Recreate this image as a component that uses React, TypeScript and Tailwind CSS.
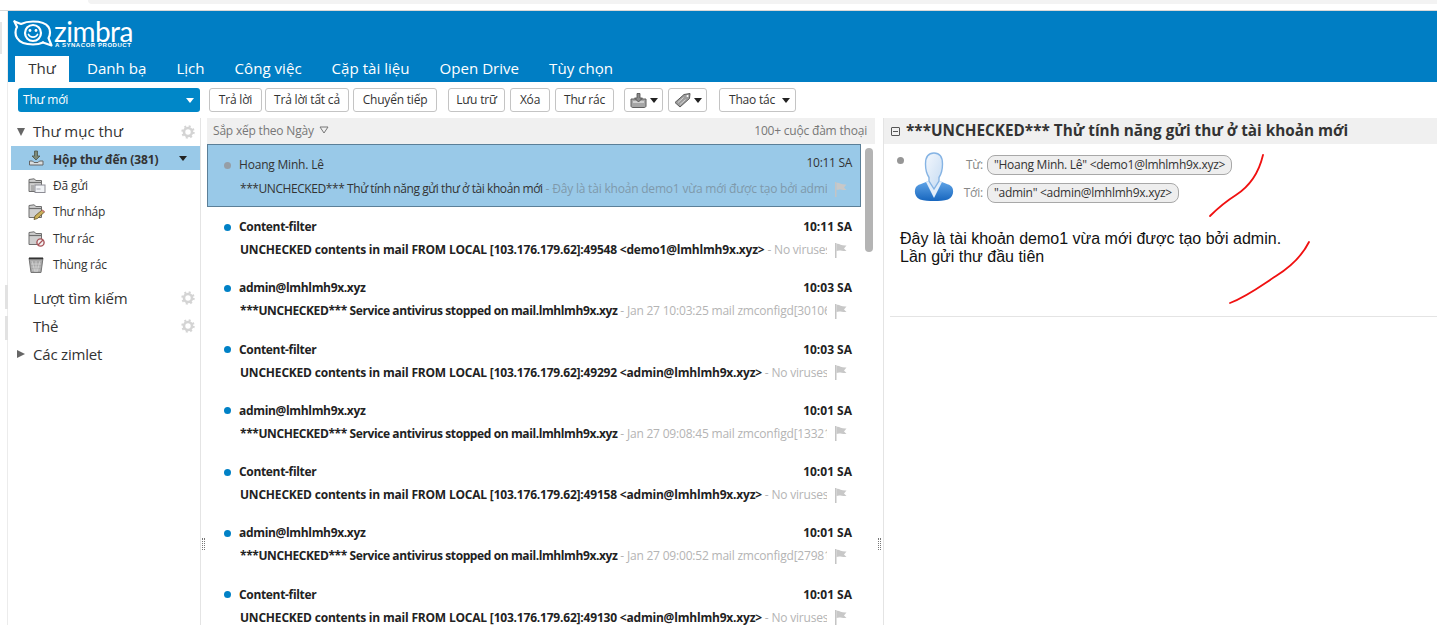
import React from 'react';

const tabs = ['Thư', 'Danh bạ', 'Lịch', 'Công việc', 'Cặp tài liệu', 'Open Drive', 'Tùy chọn'];

const spam = 'UNCHECKED contents in mail FROM LOCAL [103.176.179.62]:';
const stopped = '***UNCHECKED*** Service antivirus stopped on mail.lmhlmh9x.xyz';

const rows = [
  { from: 'Content-filter', time: '10:11 SA', subject: spam + '49548 <demo1@lmhlmh9x.xyz>', preview: 'No viruses found', tight: false },
  { from: 'admin@lmhlmh9x.xyz', time: '10:03 SA', subject: stopped, preview: 'Jan 27 10:03:25 mail zmconfigd[30106]', tight: true },
  { from: 'Content-filter', time: '10:03 SA', subject: spam + '49292 <admin@lmhlmh9x.xyz>', preview: 'No viruses found', tight: false },
  { from: 'admin@lmhlmh9x.xyz', time: '10:01 SA', subject: stopped, preview: 'Jan 27 09:08:45 mail zmconfigd[13321]', tight: true },
  { from: 'Content-filter', time: '10:01 SA', subject: spam + '49158 <admin@lmhlmh9x.xyz>', preview: 'No viruses found', tight: false },
  { from: 'admin@lmhlmh9x.xyz', time: '10:01 SA', subject: stopped, preview: 'Jan 27 09:00:52 mail zmconfigd[27981]', tight: true },
  { from: 'Content-filter', time: '10:01 SA', subject: spam + '49130 <admin@lmhlmh9x.xyz>', preview: 'No viruses found', tight: false },
];

function Gear() {
  return (
    <svg width="14" height="14" viewBox="0 0 14 14" className="shrink-0">
      <circle cx="7" cy="7" r="4" fill="none" stroke="#d4d4d4" strokeWidth="2.6" />
      <circle cx="7" cy="7" r="5.7" fill="none" stroke="#d4d4d4" strokeWidth="2" strokeDasharray="2 2.48" />
    </svg>
  );
}

function Flag() {
  return (
    <svg width="14" height="15" viewBox="0 0 14 15" className="shrink-0">
      <rect x="1" y="0" width="1.5" height="15" fill="#c4c4c4" />
      <path d="M2.5 1 C5 0 7 3 12.5 2.5 L10 5.5 L12.5 8 C8 8.5 6 6.5 2.5 8 Z" fill="#c8c8c8" />
    </svg>
  );
}

function Caret({ color = '#222' }: { color?: string }) {
  return <span className="inline-block w-0 h-0 border-x-[4px] border-x-transparent border-t-[5px]" style={{ borderTopColor: color }} />;
}

function ToolButton({ label, className = '' }: { label: string; className?: string }) {
  return (
    <button className={`h-[24px] border border-[#c4c4c4] rounded-[3px] bg-white text-[12px] text-[#333] whitespace-nowrap ${className}`}>
      {label}
    </button>
  );
}

function FolderIcon({ badge }: { badge: 'sent' | 'draft' | 'spam' }) {
  return (
    <svg width="18" height="16" viewBox="0 0 18 16" className="shrink-0">
      <path d="M1 13.5 L1 1.5 L6 0.8 L8 2.5 L13.5 2.5 L13.5 13.5 Z" fill="#cfcfcf" stroke="#6f6f6f" />
      <path d="M1 4.5 H13.5" stroke="#6f6f6f" strokeWidth="1.2" />
      {badge === 'sent' && <rect x="7" y="7" width="10" height="7.5" fill="#f1f3f6" stroke="#8d8d95" />}
      {badge === 'sent' && <path d="M3 8h3M3 10h3M3 12h3" stroke="#8a8a8a" />}
      {badge === 'sent' && <path d="M8.5 11h4" stroke="#a9a9b3" />}
      {badge === 'draft' && <path d="M6 15.5 L7 12 L14 6 L16.5 8 L9.5 14.5 Z" fill="#cbb05a" stroke="#5f5128" strokeWidth="0.8" />}
      {badge === 'draft' && <path d="M14 6 L16.5 8" stroke="#d07a7a" strokeWidth="1.6" />}
      {badge === 'spam' && <circle cx="12.5" cy="11.5" r="3.6" fill="#f3f3f3" stroke="#a8555a" strokeWidth="1.4" />}
      {badge === 'spam' && <path d="M10 14 L15 9" stroke="#a8555a" strokeWidth="1.3" />}
    </svg>
  );
}

function FolderRow({ icon, label }: { icon: React.ReactNode; label: string }) {
  return (
    <div className="h-[26.3px] flex items-center pl-[17px]">
      <span className="w-[25px] flex">{icon}</span>
      <span className="text-[12px] text-[#333]">{label}</span>
    </div>
  );
}

function SectionRow({ label, gear, arrow }: { label: string; gear?: boolean; arrow?: boolean }) {
  return (
    <div className="h-[28px] flex items-center pl-[6px] pr-[5px]">
      <span className="w-[16px] flex">
        {arrow && <span className="w-0 h-0 border-y-[4.5px] border-y-transparent border-l-[8px] border-l-[#666]" />}
      </span>
      <span className="text-[15px] text-[#333]">{label}</span>
      {gear && <span className="ml-auto flex"><Gear /></span>}
    </div>
  );
}

function MailRow({ row }: { row: (typeof rows)[number] }) {
  return (
    <div className="h-[61.3px] pl-[17px] pr-[12px] pt-[10px]">
      <div className="flex items-center h-[20px]">
        <span className="w-[7px] h-[7px] rounded-full bg-[#0081c6] mr-[8px] shrink-0" />
        <span className="font-bold text-[12px] text-[#222] flex-1 tracking-[-0.33px]">{row.from}</span>
        <span className="font-bold text-[12px] text-[#222] mr-[-3px] tracking-[0px]">{row.time}</span>
      </div>
      <div className="flex items-center h-[20px] mt-[3px] pl-[16px]">
        <div className="flex-1 min-w-0 whitespace-nowrap overflow-hidden text-[12px]">
          <span className={`font-bold text-[#222] ${row.tight ? 'tracking-[-0.4px]' : ''}`}>{row.subject}</span>
          <span className="text-[#b4b4b4]"> - {row.preview}</span>
        </div>
        <span className="ml-[7px] mr-[1px] flex"><Flag /></span>
      </div>
    </div>
  );
}

export default function App() {
  return (
    <div className="relative h-[625px] w-[1437px] overflow-hidden bg-white font-['Open_Sans',sans-serif] tracking-[-0.2px]">
      {/* browser chrome leftovers */}
      <div className="h-[11px] bg-white border-b border-[#d8d8d8] pl-[88px]">
        <div className="h-[4px] bg-[#f3f3f3] rounded-bl-[4px]" />
      </div>

      <div className="flex h-[614px]">
        <div className="w-[8px] shrink-0 bg-white border-r border-[#ececec] flex flex-col">
          <div className="mt-[11px] h-[32px] w-[2px] bg-[#e6e6e6]" />
          <div className="mt-[231px] ml-[5px] h-[24px] w-[3px] bg-[#e2e2e2]" />
          <div className="mt-[7px] ml-[5px] h-[24px] w-[3px] bg-[#e2e2e2]" />
        </div>

        <div className="flex-1 min-w-0 flex flex-col">
          <header className="h-[71px] bg-[#007ec4] shrink-0 flex flex-col">
            <div className="h-[45px] flex items-start pl-[5px] pt-[8.5px]">
              <svg width="40" height="27" viewBox="0 0 40 27" className="shrink-0">
                <g fill="none" stroke="#fff" strokeLinecap="round" strokeLinejoin="round">
                  <path d="M1.5 1.5 L8 4 C12 2 16 1.5 20 1.5 C27 1.5 33 3.5 35.5 7 C37.5 10 37.5 15 35.5 18 L38.5 25.5 L30 22.5" strokeWidth="2.2" />
                  <path d="M1.5 1.5 L4 7 C2 10 2 15 4 18 C7 23 13 24.5 20 24.5 C24 24.5 27 24 30 22.5" strokeWidth="2.2" />
                  <circle cx="20" cy="13" r="8" strokeWidth="2.2" />
                  <path d="M15.5 14.5 C17 18 23 18 24.5 14.5" strokeWidth="1.7" />
                </g>
                <circle cx="17" cy="10.5" r="1.4" fill="#fff" />
                <circle cx="23" cy="10.5" r="1.4" fill="#fff" />
              </svg>
              <div className="flex flex-col ml-[1px] text-white">
                <span className="h-[22px] font-['Lato',sans-serif] text-[28px] leading-[22px] tracking-[-0.5px]">zimbra</span>
                <span className="h-[7px] mt-[0.5px] font-['Liberation_Sans',sans-serif] font-bold text-[6px] leading-[7px] tracking-[0.55px] ml-[1px] whitespace-nowrap">A SYNACOR PRODUCT</span>
              </div>
            </div>
            <nav className="h-[26px] flex items-stretch pl-[7px] tracking-[0px]">
              {tabs.map((tab, i) => (
                <div
                  key={tab}
                  className={`flex items-center justify-center text-[15.1px] leading-none ${
                    i === 0 ? 'bg-white text-[#333] w-[54px] mr-[3px]' : 'text-white px-[15px]'
                  }`}
                >
                  {tab}
                </div>
              ))}
            </nav>
          </header>

          <div className="h-[36px] shrink-0 flex items-center pl-[10px]">
            <button className="w-[182px] h-[24px] rounded-[3px] bg-[#0087c8] flex items-center justify-between px-[5px] pr-[6px] mr-[9px] text-white text-[12px]">
              Thư mới
              <Caret color="#fff" />
            </button>
            <ToolButton label="Trả lời" className="w-[53px]" />
            <ToolButton label="Trả lời tất cả" className="w-[84px] ml-[3px]" />
            <ToolButton label="Chuyển tiếp" className="w-[84px] ml-[4px]" />
            <ToolButton label="Lưu trữ" className="w-[57px] ml-[11px]" />
            <ToolButton label="Xóa" className="w-[40px] ml-[5px]" />
            <ToolButton label="Thư rác" className="w-[59px] ml-[5px]" />
            <button className="ml-[10px] h-[24px] w-[39px] border border-[#c4c4c4] rounded-[3px] flex items-center justify-center gap-[3px]">
              <svg width="17" height="15" viewBox="0 0 17 15">
                <path d="M1 6 H16 V13 C16 14 15 14.5 14 14.5 H3 C2 14.5 1 14 1 13 Z" fill="#a6a6a6" stroke="#5f5f5f" />
                <path d="M3 9 H14" stroke="#e2e2e2" strokeWidth="1.4" />
                <path d="M7 0.5 H10 V5 H12.5 L8.5 9 L4.5 5 H7 Z" fill="#8a8a8a" stroke="#4c4c4c" strokeWidth="0.8" />
              </svg>
              <Caret />
            </button>
            <button className="ml-[5px] h-[24px] w-[39px] border border-[#c4c4c4] rounded-[3px] flex items-center justify-center gap-[3px]">
              <svg width="17" height="15" viewBox="0 0 17 15">
                <path d="M1 9.5 L10 1.5 L16 0.5 L15.5 5.5 L6 14 Z" fill="#9c9c9c" stroke="#5a5a5a" />
                <path d="M4 9.5 L9.5 4.5 M6 11.5 L11.5 6.5" stroke="#d6d6d6" />
                <circle cx="13.5" cy="3" r="1" fill="#fff" />
              </svg>
              <Caret />
            </button>
            <button className="ml-[12px] h-[24px] w-[77px] border border-[#c4c4c4] rounded-[3px] flex items-center justify-between pl-[9px] pr-[5px] text-[12px] text-[#333]">
              Thao tác
              <Caret />
            </button>
          </div>

          <div className="flex-1 min-h-0 flex">
            <aside className="w-[192px] shrink-0 pl-[3px] pr-0">
              <div className="h-[28px] flex items-center pl-[6px] pr-[5px]">
                <span className="w-[16px] flex"><span className="w-0 h-0 border-x-[4.5px] border-x-transparent border-t-[8px] border-t-[#666]" /></span>
                <span className="text-[15px] text-[#333] tracking-[0px] -mt-[2px]">Thư mục thư</span>
                <span className="ml-auto flex"><Gear /></span>
              </div>
              <div className="h-[24px] bg-[#99c9e8] flex items-center pl-[18px] pr-[13px]">
                <svg width="15" height="16" viewBox="0 0 15 16" className="shrink-0 mr-[9px]">
                  <path d="M5.5 1 H8.5 V6 H11 L7 10 L3 6 H5.5 Z" fill="#7d8a78" stroke="#4a544a" strokeWidth="0.8" />
                  <path d="M0.5 11 H3.5 L5 12.5 H9 L10.5 11 H14 V15 H0.5 Z" fill="#d9dee0" stroke="#666" />
                </svg>
                <span className="font-bold text-[12px] text-[#333] flex-1 pt-[3px] tracking-[-0.1px]">Hộp thư đến (381)</span>
                <Caret />
              </div>
              <div className="mt-[3px]">
                <FolderRow icon={<FolderIcon badge="sent" />} label="Đã gửi" />
                <FolderRow icon={<FolderIcon badge="draft" />} label="Thư nháp" />
                <FolderRow icon={<FolderIcon badge="spam" />} label="Thư rác" />
                <FolderRow
                  icon={
                    <svg width="16" height="16" viewBox="0 0 16 16">
                      <path d="M1 1 H15 L13 15.5 H3 Z" fill="#a8a8a8" stroke="#777" />
                      <path d="M1 1.5 H15" stroke="#333" strokeWidth="1.6" />
                      <path d="M4 4 L7 15 M8 4 V15 M12 4 L9 15 M3 7 H13 M3.5 10 H12.5 M4 13 H12" stroke="#d8d8d8" strokeWidth="0.7" />
                    </svg>
                  }
                  label="Thùng rác"
                />
              </div>
              <div className="mt-[6px]">
                <SectionRow label="Lượt tìm kiếm" gear />
                <SectionRow label="Thẻ" gear />
                <SectionRow label="Các zimlet" arrow />
              </div>
            </aside>

            <div className="w-[7px] shrink-0 relative border-l border-[#e4e4e4]">
              <div className="absolute top-[420px] left-[1px] w-[3px] h-[12px] border-x border-dotted border-[#777]" />
            </div>

            <section className="w-[668px] shrink-0 flex flex-col min-h-0">
              <div className="h-[26px] shrink-0 bg-[#f0f0f0] flex items-center pl-[6px] pr-[8px] text-[12px] text-[#777]">
                Sắp xếp theo Ngày
                <svg width="10" height="8" viewBox="0 0 10 8" className="ml-[5px] mb-[3px]">
                  <path d="M1 1 H9 L5 7 Z" fill="none" stroke="#777" />
                </svg>
                <span className="ml-auto">100+ cuộc đàm thoại</span>
              </div>
              <div className="flex-1 min-h-0 relative pr-[14px] overflow-hidden">
                <div className="h-[63px] bg-[#99c9e8] border border-[#5b7f98] pl-[16px] pr-[11px] pt-[10px]">
                  <div className="flex items-center h-[20px]">
                    <span className="w-[7px] h-[7px] rounded-full bg-[#969ea6] mr-[8px] shrink-0" />
                    <span className="text-[12px] text-[#333] flex-1">Hoang Minh. Lê</span>
                    <span className="text-[12px] text-[#333] mr-[-3px] -mt-[4px] tracking-[-0.3px]">10:11 SA</span>
                  </div>
                  <div className="flex items-center h-[20px] mt-[4px] pl-[16px]">
                    <div className="flex-1 min-w-0 whitespace-nowrap overflow-hidden text-[12px]">
                      <span className="text-[#333] tracking-[-0.43px]">***UNCHECKED*** Thử tính năng gửi thư ở tài khoản mới</span>
                      <span className="text-[#7f99ab]"> - Đây là tài khoản demo1 vừa mới được tạo bởi admin. Lần gửi</span>
                    </div>
                    <span className="ml-[7px] mr-[1px] flex"><Flag /></span>
                  </div>
                </div>
                {rows.map((row, i) => (
                  <MailRow key={i} row={row} />
                ))}
                <div className="absolute right-[2px] top-[4px] w-[8px] h-[104px] rounded-full bg-[#b4b4b4]" />
              </div>
            </section>

            <div className="w-[9px] shrink-0 relative border-r border-[#e4e4e4]">
              <div className="absolute top-[420px] left-[3px] w-[3px] h-[12px] border-x border-dotted border-[#777]" />
            </div>

            <section className="flex-1 min-w-0">
              <div className="h-[26px] bg-[#f0f0f0] flex items-center pl-[7px]">
                <span className="w-[9px] h-[9px] border border-[#555] rounded-[1px] relative mr-[6px] shrink-0">
                  <span className="absolute left-[1px] right-[1px] top-[3px] h-px bg-[#555]" />
                </span>
                <span className="font-bold text-[15.3px] text-[#333] tracking-[0px] whitespace-nowrap -mt-[2px]">***UNCHECKED*** Thử tính năng gửi thư ở tài khoản mới</span>
              </div>
              <div className="h-[173px] border-b border-[#e4e4e4] ml-[6px]">
                <div className="flex pt-[6px]">
                  <span className="w-[7px] h-[7px] rounded-full bg-[#969696] mt-[7px] ml-[7px] shrink-0" />
                  <svg width="40" height="49" viewBox="0 0 40 49" className="ml-[10px] mt-[2px] shrink-0">
                    <defs>
                      <linearGradient id="head" x1="0" y1="0" x2="1" y2="1">
                        <stop offset="0" stopColor="#f4f8fd" />
                        <stop offset="1" stopColor="#c4daf2" />
                      </linearGradient>
                      <linearGradient id="body" x1="0" y1="0" x2="0" y2="1">
                        <stop offset="0" stopColor="#62a6e8" />
                        <stop offset="1" stopColor="#1766be" />
                      </linearGradient>
                    </defs>
                    <path d="M14 29 C9 32 3 32 1.5 36 C0 40 1 45 6 47.5 C14 49.5 26 49.5 34 47.5 C39 45 40 40 38.5 36 C37 32 31 32 26 29 Z" fill="url(#body)" />
                    <path d="M12 30 L20 46 L28 30 L25 28.5 L20 37 L15 28.5 Z" fill="#e3eefa" />
                    <path d="M20 1 C25.5 1 28.5 5 28.5 12 C28.5 19 26 24 25 25.5 L25 29 L20 37 L15 29 L15 25.5 C14 24 11.5 19 11.5 12 C11.5 5 14.5 1 20 1 Z" fill="url(#head)" stroke="#86b4e4" strokeWidth="1.4" />
                  </svg>
                  <div className="ml-[9px] mt-[5px] flex flex-col gap-[8px] text-[12px]">
                    <div className="flex items-center">
                      <span className="w-[20px] text-right text-[#888] mr-[4px]">Từ:</span>
                      <span className="h-[20px] leading-[18px] px-[6px] rounded-[8px] border border-[#a8a8a8] bg-[#eeeeee] text-[#333] whitespace-nowrap tracking-[-0.27px]">"Hoang Minh. Lê" &lt;demo1@lmhlmh9x.xyz&gt;</span>
                    </div>
                    <div className="flex items-center">
                      <span className="w-[20px] text-right text-[#888] mr-[4px]">Tới:</span>
                      <span className="h-[20px] leading-[18px] px-[6px] rounded-[8px] border border-[#a8a8a8] bg-[#eeeeee] text-[#333] whitespace-nowrap tracking-[-0.27px]">"admin" &lt;admin@lmhlmh9x.xyz&gt;</span>
                    </div>
                  </div>
                </div>
                <div className="mt-[27px] pl-[10px] font-['Liberation_Sans',sans-serif] text-[16px] leading-[18px] text-[#111] tracking-[0px]">
                  <p>Đây là tài khoản demo1 vừa mới được tạo bởi admin.</p>
                  <p>Lần gửi thư đầu tiên</p>
                </div>
              </div>
            </section>
          </div>
        </div>
      </div>

      {/* red pen marks on top of the screenshot */}
      <svg width="1437" height="625" className="absolute inset-0 pointer-events-none" fill="none" stroke="#f01010" strokeWidth="1.8" strokeLinecap="round">
        <path d="M1263 155 C1259 172 1250 186 1236 195 C1225 202 1218 208 1210 216" />
        <path d="M1309 242 C1302 256 1292 266 1276 276 C1262 285 1248 296 1230 303" />
      </svg>
    </div>
  );
}
